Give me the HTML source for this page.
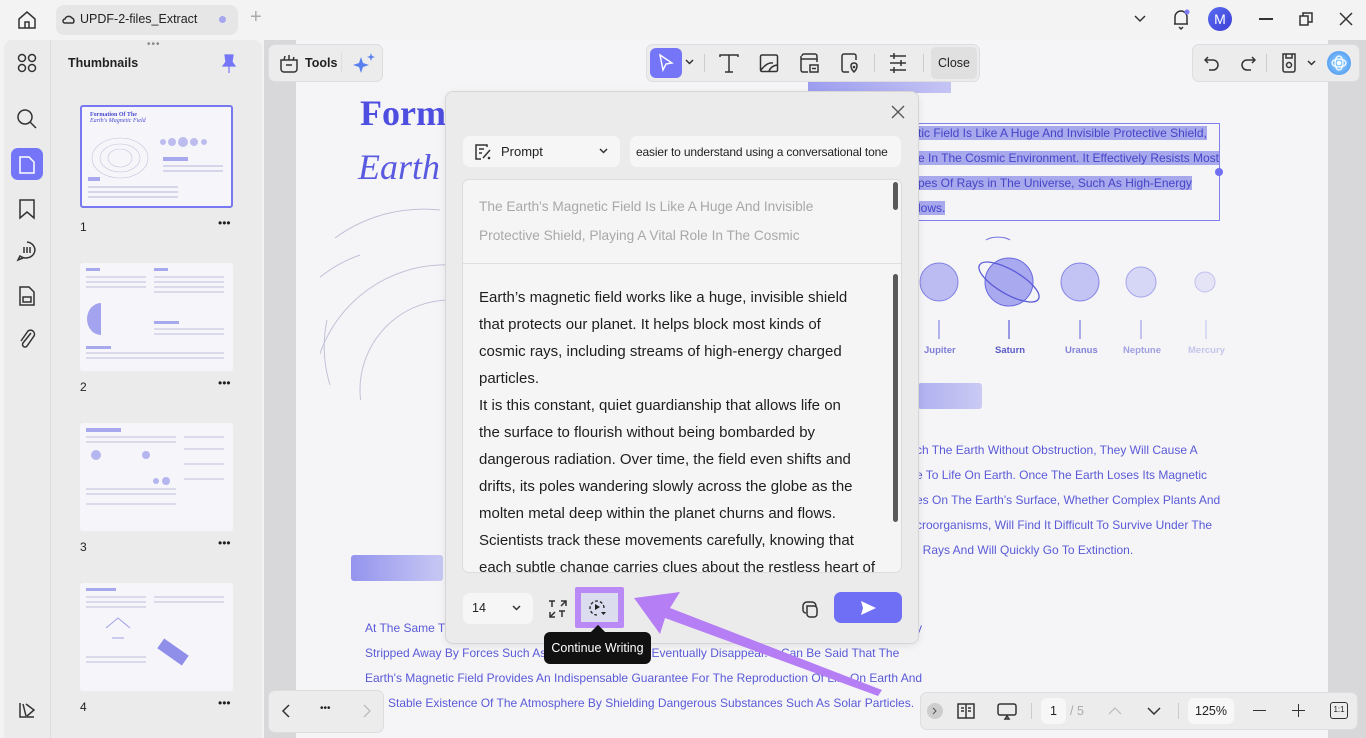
<!DOCTYPE html>
<html><head><meta charset="utf-8"><style>
*{box-sizing:border-box;margin:0;padding:0}
body{width:1366px;height:738px;overflow:hidden;background:#f3f3f3;font-family:"Liberation Sans",sans-serif;position:relative;color:#222}
.a{position:absolute}
.pdf{color:#5a5ad8;font-size:12px;white-space:nowrap}
.ico{stroke:#333;fill:none;stroke-width:1.5}
</style></head><body>
<!-- top bar -->
<svg class="a" style="left:16px;top:9px" width="22" height="22" viewBox="0 0 22 22"><path class="ico" d="M3 10 L11 3 L19 10 V19 H3Z M9 19 V13 H13 V19"/></svg>
<div class="a" style="left:56px;top:5px;width:182px;height:30px;background:#e6e6e6;border-radius:8px"></div>
<div class="a" style="left:80px;top:12px;font-size:12.5px">UPDF-2-files_Extract</div>
<svg class="a" style="left:62px;top:13px" width="14" height="12"><path class="ico" stroke-width="1.1" d="M3 10 H11 A3 3 0 0 0 10 5 A4 4 0 0 0 3 6 A2 2 0 0 0 3 10Z"/></svg>
<div class="a" style="left:219px;top:16px;width:7px;height:7px;border-radius:50%;background:#a6a6ee"></div>
<div class="a" style="left:250px;top:6px;font-size:20px;color:#aaa">+</div>
<svg class="a" style="left:1133px;top:13px" width="14" height="10"><path class="ico" stroke-width="1.2" d="M2 3 L7 8 L12 3"/></svg>
<svg class="a" style="left:1170px;top:7px" width="22" height="24"><path class="ico" stroke-width="1.3" d="M5 17 V10 A6 6 0 0 1 17 10 V17 H4 H18 M9 20 L11 22 L13 20"/><circle cx="17" cy="5" r="2.5" fill="#7b7bf5"/></svg>
<div class="a" style="left:1208px;top:7px;width:24px;height:24px;border-radius:50%;background:linear-gradient(135deg,#5a6cf0,#3c3fd6);color:#fff;font-size:14px;text-align:center;line-height:24px">M</div>
<div class="a" style="left:1259px;top:18px;width:14px;height:1.5px;background:#333"></div>
<svg class="a" style="left:1298px;top:11px" width="16" height="16"><path class="ico" stroke-width="1.2" d="M2 5 H10 V14 H2Z M5 5 V2 H14 V11 H10"/></svg>
<svg class="a" style="left:1338px;top:11px" width="16" height="16"><path class="ico" stroke-width="1.2" d="M2 2 L14 14 M14 2 L2 14"/></svg>

<!-- left rail + panel -->
<div class="a" style="left:4px;top:40px;width:258px;height:698px;background:#ebebeb;border-radius:8px 8px 0 0"></div>
<div class="a" style="left:50px;top:40px;width:1px;height:698px;background:#dcdcdc"></div>
<div class="a" style="left:147px;top:39px;font-size:10px;color:#888;letter-spacing:1px">•••</div>
<svg class="a" style="left:17px;top:53px" width="20" height="20"><g class="ico" stroke-width="1.2"><circle cx="5" cy="5" r="3.5"/><circle cx="15" cy="5" r="3.5"/><circle cx="5" cy="15" r="3.5"/><circle cx="15" cy="15" r="3.5"/></g></svg>
<svg class="a" style="left:16px;top:108px" width="22" height="22"><path class="ico" d="M9 2 A7 7 0 1 0 9 16 A7 7 0 1 0 9 2 M14 14 L20 20"/></svg>
<div class="a" style="left:11px;top:148px;width:32px;height:32px;background:#7575f7;border-radius:7px"></div>
<svg class="a" style="left:18px;top:155px" width="18" height="20"><path d="M2 2 H11 L16 7 V18 H2Z" fill="none" stroke="#fff" stroke-width="1.5"/></svg>
<svg class="a" style="left:18px;top:198px" width="18" height="22"><path class="ico" d="M2 2 H16 V20 L9 14 L2 20Z"/></svg>
<svg class="a" style="left:15px;top:240px" width="24" height="22"><path class="ico" d="M12 2 A9 8 0 1 1 5 16 L3 20 L8 18 M9 7 V13 M12 7 V13 M15 7 V13"/></svg>
<svg class="a" style="left:18px;top:285px" width="18" height="22"><path class="ico" d="M2 2 H11 L16 7 V20 H2Z M5 12 H13 V17 H5Z"/></svg>
<svg class="a" style="left:17px;top:328px" width="20" height="22"><path class="ico" d="M14 5 L6 15 A2.5 2.5 0 0 0 10 18 L17 8 A4 4 0 0 0 11 3 L4 13"/></svg>
<svg class="a" style="left:17px;top:700px" width="20" height="20"><path class="ico" d="M3 3 V17 H17 M6 4 L9 16 M9 4 L17 10 L10 16"/></svg>

<div class="a" style="left:68px;top:56px;font-size:12.5px;font-weight:bold">Thumbnails</div>
<svg class="a" style="left:221px;top:54px" width="16" height="20"><path d="M4 1 H12 L11 8 L14 12 H2 L5 8Z M8 12 V19" fill="#7575f7" stroke="#7575f7" stroke-width="1.2"/></svg>

<!-- thumbnails -->
<div class="a" style="left:80px;top:105px;width:153px;height:103px;background:#f6f6fa;border:2px solid #7878f0;border-radius:3px"></div>
<div class="a" style="left:90px;top:112px;font:bold 6px 'Liberation Serif',serif;color:#4a4ad0">Formation Of The<br><i style="font-weight:normal">Earth's Magnetic Field</i></div>
<svg class="a" style="left:88px;top:130px" width="145" height="75"><g fill="none" stroke="#c3c3dd" stroke-width=".6"><ellipse cx="32" cy="28" rx="28" ry="20"/><ellipse cx="32" cy="28" rx="20" ry="14"/><ellipse cx="32" cy="28" rx="12" ry="9"/></g><g fill="#bcbcef"><circle cx="75" cy="12" r="3"/><circle cx="84" cy="12" r="4"/><circle cx="95" cy="12" r="5"/><circle cx="106" cy="12" r="4"/><circle cx="116" cy="12" r="3"/></g><rect x="75" y="27" width="25" height="4" fill="#a8a8ee"/><rect x="0" y="47" width="12" height="4" fill="#a8a8ee"/><g fill="#d6d6ea"><rect x="75" y="35" width="60" height="2"/><rect x="75" y="40" width="60" height="2"/><rect x="0" y="56" width="90" height="2"/><rect x="0" y="61" width="90" height="2"/><rect x="0" y="66" width="90" height="2"/></g><rect x="75" y="-8" width="30" height="3" fill="#a8a8ee"/></svg>
<div class="a" style="left:80px;top:220px;font-size:12px">1</div><div class="a" style="left:218px;top:216px;font-size:12px">•••</div>

<div class="a" style="left:80px;top:263px;width:153px;height:108px;background:#f6f6fa;border-radius:3px"></div>
<svg class="a" style="left:86px;top:268px" width="145" height="100"><rect x="0" y="0" width="14" height="3" fill="#a8a8ee"/><rect x="68" y="0" width="14" height="3" fill="#a8a8ee"/><g fill="#dadaea"><rect x="0" y="8" width="60" height="2"/><rect x="0" y="13" width="60" height="2"/><rect x="0" y="18" width="60" height="2"/><rect x="68" y="8" width="70" height="2"/><rect x="68" y="13" width="70" height="2"/><rect x="68" y="18" width="70" height="2"/><rect x="68" y="23" width="70" height="2"/><rect x="68" y="60" width="70" height="2"/><rect x="68" y="65" width="70" height="2"/><rect x="0" y="84" width="138" height="2"/><rect x="0" y="89" width="138" height="2"/></g><path d="M15 35 A14 16 0 0 0 15 67Z" fill="#a3a3ef"/><rect x="0" y="78" width="25" height="3" fill="#a8a8ee"/><rect x="68" y="53" width="25" height="3" fill="#a8a8ee"/></svg>
<div class="a" style="left:80px;top:380px;font-size:12px">2</div><div class="a" style="left:218px;top:376px;font-size:12px">•••</div>

<div class="a" style="left:80px;top:423px;width:153px;height:108px;background:#f6f6fa;border-radius:3px"></div>
<svg class="a" style="left:86px;top:428px" width="145" height="100"><rect x="0" y="0" width="35" height="4" fill="#a8a8ee"/><g fill="#dadaea"><rect x="0" y="8" width="90" height="2"/><rect x="0" y="13" width="90" height="2"/><rect x="98" y="8" width="40" height="2"/><rect x="98" y="20" width="40" height="2"/><rect x="98" y="35" width="40" height="2"/><rect x="98" y="50" width="40" height="2"/><rect x="0" y="60" width="90" height="2"/><rect x="0" y="65" width="90" height="2"/><rect x="0" y="75" width="90" height="2"/></g><g fill="#b5b5ef"><circle cx="10" cy="27" r="5"/><circle cx="60" cy="27" r="4"/><circle cx="70" cy="53" r="3"/><circle cx="80" cy="53" r="4"/></g></svg>
<div class="a" style="left:80px;top:540px;font-size:12px">3</div><div class="a" style="left:218px;top:536px;font-size:12px">•••</div>

<div class="a" style="left:80px;top:583px;width:153px;height:108px;background:#f6f6fa;border-radius:3px"></div>
<svg class="a" style="left:86px;top:588px" width="145" height="100"><rect x="0" y="0" width="30" height="3" fill="#a8a8ee"/><g fill="#dadaea"><rect x="0" y="8" width="60" height="2"/><rect x="0" y="13" width="60" height="2"/><rect x="0" y="18" width="60" height="2"/><rect x="68" y="8" width="70" height="2"/><rect x="68" y="13" width="70" height="2"/><rect x="0" y="68" width="60" height="2"/><rect x="0" y="73" width="60" height="2"/></g><path d="M20 40 L32 30 L44 40 M26 50 L38 50" stroke="#9f9fea" fill="none"/><rect x="72" y="58" width="30" height="12" fill="#8f8fea" transform="rotate(35 87 64)"/></svg>
<div class="a" style="left:80px;top:700px;font-size:12px">4</div><div class="a" style="left:218px;top:696px;font-size:12px">•••</div>

<!-- viewer -->
<div class="a" style="left:264px;top:40px;width:1102px;height:698px;background:#d8d8da"></div>
<div class="a" style="left:296px;top:40px;width:1032px;height:698px;background:#f5f5f7"></div>

<!-- PDF content -->
<div class="a" style="left:360px;top:92px;font:bold 36px 'Liberation Serif',serif;color:#4e4ee0">Form</div>
<div class="a" style="left:358px;top:146px;font:italic 36px 'Liberation Serif',serif;color:#5a5ae0">Earth</div>
<svg class="a" style="left:320px;top:200px" width="130" height="200"><g fill="none" stroke="#c2c2d8" stroke-width="1"><path d="M120 10 A150 150 0 0 0 15 38"/><path d="M40 55 A125 125 0 0 0 130 312"/><path d="M130 65 A110 110 0 0 0 120 330"/><path d="M130 100 A80 80 0 0 0 130 280"/><path d="M7 120 A130 130 0 0 0 10 185"/></g></svg>
<div class="a" style="left:808px;top:80px;width:143px;height:13px;background:linear-gradient(90deg,#9d9df0,#c4c4f4)"></div>
<div class="a" style="left:351px;top:555px;width:92px;height:26px;border-radius:3px;background:linear-gradient(90deg,#9494ee,#c8c8f4)"></div>
<div class="a" style="left:918px;top:383px;width:64px;height:26px;border-radius:3px;background:linear-gradient(90deg,#b0b0f0,#cacaf4)"></div>

<div class="a" style="left:910px;top:123px;width:310px;height:98px;border:1.5px solid #8080ec"></div>
<div class="a" style="left:1215px;top:168px;width:8px;height:8px;border-radius:50%;background:#6f6ff0"></div>
<div class="a pdf" style="left:918px;top:121px;line-height:25px;color:#4545c8">
<span style="background:#a8a8ec">tic Field Is Like A Huge And Invisible Protective Shield,</span><br>
<span style="background:#a8a8ec">e In The Cosmic Environment. It Effectively Resists Most</span><br>
<span style="background:#a8a8ec">pes Of Rays in The Universe, Such As High-Energy</span><br>
<span style="background:#a8a8ec">lows.</span></div>

<svg class="a" style="left:910px;top:235px" width="320" height="130"><path d="M76 5 A14 6 0 0 1 100 5" stroke="#6d6de0" fill="none"/><circle cx="29" cy="47" r="19" fill="#bcbcf2" stroke="#8080e4"/><circle cx="99" cy="47" r="24" fill="#a9a9f0" stroke="#6a6ae0"/><ellipse cx="99" cy="47" rx="34" ry="12" transform="rotate(30 99 47)" fill="none" stroke="#5a5ad8" stroke-width="1.3"/><circle cx="170" cy="47" r="19" fill="#c4c4f4" stroke="#8484e4"/><circle cx="231" cy="47" r="15" fill="#d6d6f6" stroke="#a5a5ec"/><circle cx="295" cy="47" r="10" fill="#e4e4f6" stroke="#c0c0ee"/><g stroke-width="1.2"><path d="M29 85 V104" stroke="#8686e4"/><path d="M99 85 V104" stroke="#5a5ad8"/><path d="M170 85 V104" stroke="#7a7ae0"/><path d="M231 85 V104" stroke="#a0a0ea"/><path d="M296 85 V104" stroke="#c8c8f0"/></g></svg>
<div class="a" style="left:924px;top:345px;font-size:9.5px;font-weight:bold;color:#7e7ed8">Jupiter</div>
<div class="a" style="left:995px;top:345px;font-size:9.5px;font-weight:bold;color:#5b5bc8">Saturn</div>
<div class="a" style="left:1065px;top:345px;font-size:9.5px;font-weight:bold;color:#8282d8">Uranus</div>
<div class="a" style="left:1123px;top:345px;font-size:9.5px;font-weight:bold;color:#a0a0e2">Neptune</div>
<div class="a" style="left:1188px;top:345px;font-size:9.5px;font-weight:bold;color:#c4c4ec">Mercury</div>

<div class="a pdf" style="left:916px;top:438px;line-height:25px">ch The Earth Without Obstruction, They Will Cause A<br>e To Life On Earth. Once The Earth Loses Its Magnetic<br>es On The Earth's Surface, Whether Complex Plants And<br>croorganisms, Will Find It Difficult To Survive Under The<br>: Rays And Will Quickly Go To Extinction.</div>
<div class="a pdf" style="left:365px;top:616px;line-height:25px">At The Same Ti<br>Stripped Away By Forces Such As <span style="margin-left:92px">d Eventually Disappear. It Can Be Said That The</span><br>Earth's Magnetic Field Provides An Indispensable Guarantee For The Reproduction Of Life On Earth And<br><span style="margin-left:23px">Stable Existence Of The Atmosphere By Shielding Dangerous Substances Such As Solar Particles.</span></div>
<div class="a pdf" style="left:916px;top:621px">y</div>

<!-- toolbars -->
<div class="a" style="left:268px;top:44px;width:115px;height:38px;background:#ececec;border:1px solid #ddd;border-radius:7px"></div>
<svg class="a" style="left:279px;top:52px" width="20" height="22"><path class="ico" stroke-width="1.3" d="M2 8 H18 V17 A3 3 0 0 1 15 20 H5 A3 3 0 0 1 2 17Z M7 13 H13 M5 8 L6 4 M10 8 L10 3 M14 8 L15 5"/></svg>
<div class="a" style="left:305px;top:56px;font-size:12.5px;font-weight:bold">Tools</div>
<div class="a" style="left:341px;top:52px;width:1px;height:20px;background:#ddd"></div>
<svg class="a" style="left:352px;top:52px" width="24" height="22"><path d="M9 5 L11 11 L17 13 L11 15 L9 21 L7 15 L1 13 L7 11Z" fill="#5a80f0"/><path d="M19 1 L20 4 L23 5 L20 6 L19 9 L18 6 L15 5 L18 4Z" fill="#5a80f0"/></svg>

<div class="a" style="left:646px;top:44px;width:334px;height:38px;background:#ececec;border:1px solid #ddd;border-radius:7px"></div>
<div class="a" style="left:650px;top:48px;width:32px;height:30px;background:#7575f7;border-radius:6px"></div>
<svg class="a" style="left:657px;top:53px" width="18" height="20"><path d="M3 2 L15 10 L9 11 L6 17Z" fill="none" stroke="#fff" stroke-width="1.4"/></svg>
<svg class="a" style="left:685px;top:59px" width="9" height="6"><path class="ico" stroke-width="1.1" d="M1 1 L4.5 4.5 L8 1"/></svg>
<div class="a" style="left:704px;top:54px;width:1px;height:18px;background:#ccc"></div>
<svg class="a" style="left:718px;top:53px" width="22" height="20"><path class="ico" d="M2 4 V2 H20 V4 M11 2 V19 M7 19 H15"/></svg>
<svg class="a" style="left:759px;top:53px" width="20" height="20"><path class="ico" stroke-width="1.3" d="M3 2 H17 A1.5 1.5 0 0 1 18.5 3.5 V17 A1.5 1.5 0 0 1 17 18.5 H3 A1.5 1.5 0 0 1 1.5 17 V3.5 A1.5 1.5 0 0 1 3 2 M2 17 Q8 9 14 10 M10 18 Q12 13 18 12"/></svg>
<svg class="a" style="left:799px;top:52px" width="22" height="22"><path class="ico" stroke-width="1.3" d="M3 4 A2 2 0 0 1 5 2 H16 A2 2 0 0 1 18 4 V10 M2 7 H18 M2 4 V18 A2 2 0 0 0 4 20 H9 M11 13 H19 V20 H11Z M13 16.5 H17"/></svg>
<svg class="a" style="left:839px;top:52px" width="22" height="22"><path class="ico" stroke-width="1.3" d="M3 4 A2 2 0 0 1 5 2 H15 A2 2 0 0 1 17 4 V8 M3 4 V18 A2 2 0 0 0 5 20 H10 M15 20 C11 16 11 11 15 11 C19 11 19 16 15 20Z"/><circle cx="15" cy="15" r="1.3" fill="#333"/></svg>
<div class="a" style="left:874px;top:54px;width:1px;height:18px;background:#ccc"></div>
<svg class="a" style="left:888px;top:52px" width="20" height="22"><path class="ico" stroke-width="1.3" d="M2 4 H18 M2 11 H18 M2 18 H18 M6 1 V7 M13 8 V14 M6 15 V21"/></svg>
<div class="a" style="left:923px;top:54px;width:1px;height:18px;background:#ccc"></div>
<div class="a" style="left:931px;top:47px;width:46px;height:32px;background:#e0e0e0;border-radius:5px;font-size:12.5px;text-align:center;line-height:32px">Close</div>

<div class="a" style="left:1192px;top:44px;width:168px;height:38px;background:#ececec;border:1px solid #ddd;border-radius:7px"></div>
<svg class="a" style="left:1204px;top:55px" width="16" height="16"><path class="ico" stroke-width="1.2" d="M4 2 L1 5 L4 8 M1 5 H9 A5 5 0 0 1 9 15 H5"/></svg>
<svg class="a" style="left:1240px;top:55px" width="16" height="16"><path class="ico" stroke-width="1.2" d="M12 2 L15 5 L12 8 M15 5 H7 A5 5 0 0 0 7 15 H11"/></svg>
<div class="a" style="left:1266px;top:54px;width:1px;height:18px;background:#ccc"></div>
<svg class="a" style="left:1280px;top:52px" width="18" height="22"><path class="ico" stroke-width="1.2" d="M3 2 H15 V18 A2 2 0 0 1 13 20 H5 A2 2 0 0 1 3 18Z M6 2 V6 H12 V2"/><circle cx="9" cy="13" r="2.5" class="ico" stroke-width="1.2"/></svg>
<svg class="a" style="left:1307px;top:60px" width="9" height="6"><path class="ico" stroke-width="1.1" d="M1 1 L4.5 4.5 L8 1"/></svg>
<div class="a" style="left:1327px;top:51px;width:24px;height:24px;border-radius:50%;background:radial-gradient(circle,#9fd8ff,#3c8cf0)"></div>
<svg class="a" style="left:1330px;top:54px" width="18" height="18"><ellipse cx="9" cy="9" rx="7" ry="4" fill="none" stroke="#fff" stroke-width="1.2"/><ellipse cx="9" cy="9" rx="4" ry="7" fill="none" stroke="#fff" stroke-width="1.2"/><circle cx="9" cy="9" r="2" fill="#fff"/></svg>

<!-- dialog -->
<div class="a" style="left:445px;top:91px;width:474px;height:553px;background:#ebebeb;border:1px solid #d6d6d6;border-radius:8px;box-shadow:0 2px 8px rgba(0,0,0,.08)"></div>
<svg class="a" style="left:890px;top:104px" width="16" height="16"><path d="M2 2 L14 14 M14 2 L2 14" stroke="#555" stroke-width="1.3"/></svg>
<div class="a" style="left:463px;top:136px;width:157px;height:31px;background:#f6f6f6;border-radius:7px"></div>
<svg class="a" style="left:474px;top:143px" width="18" height="18"><path class="ico" stroke-width="1.2" d="M13 4 V2 H2 V16 H7 M5 6 H10 M5 10 H8 M9 15 L16 7"/><circle cx="15" cy="15" r="1.3" fill="#333"/></svg>
<div class="a" style="left:501px;top:144px;font-size:13px">Prompt</div>
<svg class="a" style="left:599px;top:148px" width="9" height="6"><path class="ico" stroke-width="1.1" d="M1 1 L4.5 4.5 L8 1"/></svg>
<div class="a" style="left:630px;top:136px;width:271px;height:31px;background:#f6f6f6;border-radius:7px;overflow:hidden"></div>
<div class="a" style="left:636px;top:145px;font-size:12px;letter-spacing:-0.15px;white-space:nowrap;width:260px;overflow:hidden">easier to understand using a conversational tone</div>

<div class="a" style="left:462px;top:179px;width:440px;height:394px;background:#f5f5f5;border:1px solid #dcdcdc;border-radius:7px"></div>
<div class="a" style="left:463px;top:263px;width:438px;height:1px;background:#e0e0e0"></div>
<div class="a" style="left:479px;top:192px;font-size:13.7px;line-height:29px;color:#a8a8a8">The Earth's Magnetic Field Is Like A Huge And Invisible<br>Protective Shield, Playing A Vital Role In The Cosmic</div>
<div class="a" style="left:893px;top:182px;width:5px;height:28px;background:#5a5a5a;border-radius:3px"></div>
<div class="a" style="left:893px;top:274px;width:5px;height:248px;background:#5a5a5a;border-radius:3px"></div>
<div class="a" style="left:463px;top:284px;width:420px;height:288px;overflow:hidden">
<div style="padding-left:16px;font-size:15px;line-height:27px;color:#1e1e1e;white-space:nowrap">Earth’s magnetic field works like a huge, invisible shield<br>that protects our planet. It helps block most kinds of<br>cosmic rays, including streams of high-energy charged<br>particles.<br>It is this constant, quiet guardianship that allows life on<br>the surface to flourish without being bombarded by<br>dangerous radiation. Over time, the field even shifts and<br>drifts, its poles wandering slowly across the globe as the<br>molten metal deep within the planet churns and flows.<br>Scientists track these movements carefully, knowing that<br>each subtle change carries clues about the restless heart of</div></div>

<div class="a" style="left:463px;top:593px;width:70px;height:31px;background:#f6f6f6;border-radius:7px"></div>
<div class="a" style="left:472px;top:601px;font-size:12.5px">14</div>
<svg class="a" style="left:512px;top:605px" width="9" height="6"><path class="ico" stroke-width="1.1" d="M1 1 L4.5 4.5 L8 1"/></svg>
<svg class="a" style="left:547px;top:598px" width="22" height="22"><g class="ico" stroke-width="1.1"><path d="M2 3 H8 M5 3 V9 M12 13 H18 M15 13 V19 M14 3 L19 3 L19 8 M19 3 L14 8 M8 19 L3 19 L3 14 M3 19 L8 14"/></g></svg>
<div class="a" style="left:575px;top:587px;width:49px;height:41px;background:#b98af5;border-radius:2px"></div>
<div class="a" style="left:581px;top:593px;width:37px;height:29px;background:#dcdcef"></div>
<svg class="a" style="left:587px;top:597px" width="22" height="22"><path d="M17 11 A7 7 0 1 0 10 18" fill="none" stroke="#222" stroke-width="1.3" stroke-dasharray="3 2"/><path d="M8 7 L13 10 L8 13Z" fill="#222"/><path d="M14 15 L19 15 L16.5 18Z" fill="#222"/></svg>
<svg class="a" style="left:800px;top:599px" width="20" height="20"><path class="ico" stroke-width="1.3" d="M7 3 H12 A4 4 0 0 1 16 7 V8 M3 7 A4 4 0 0 1 7 3 M7 7 H14 A3 3 0 0 1 17 10 V15 A3 3 0 0 1 14 18 H10 A3 3 0 0 1 7 15Z M3 7 V11 A3 3 0 0 0 6 14"/></svg>
<div class="a" style="left:834px;top:592px;width:68px;height:31px;background:#6f6ff5;border-radius:7px"></div>
<svg class="a" style="left:859px;top:600px" width="18" height="16"><path d="M2 1 L17 8 L2 15 L4 8Z" fill="#fff"/></svg>

<!-- arrow -->
<svg class="a" style="left:620px;top:590px" width="270" height="110"><path d="M14 8 L60 2 L50 18 L262 100 L258 106 L45 28 L40 44Z" fill="#b57ef5"/></svg>

<!-- tooltip -->
<div class="a" style="left:593px;top:627px;width:10px;height:10px;background:#111;transform:rotate(45deg)"></div>
<div class="a" style="left:544px;top:632px;width:107px;height:32px;background:#111;border-radius:6px;color:#fff;font-size:12.5px;text-align:center;line-height:32px">Continue Writing</div>

<!-- bottom bars -->
<div class="a" style="left:268px;top:690px;width:116px;height:43px;background:#ececec;border:1px solid #ddd;border-radius:7px"></div>
<svg class="a" style="left:281px;top:704px" width="10" height="14"><path class="ico" stroke-width="1.3" d="M8 1 L2 7 L8 13"/></svg>
<div class="a" style="left:320px;top:703px;font-size:10px">•••</div>
<svg class="a" style="left:362px;top:704px" width="10" height="14"><path stroke="#bbb" fill="none" stroke-width="1.3" d="M2 1 L8 7 L2 13"/></svg>

<div class="a" style="left:920px;top:692px;width:438px;height:38px;background:#ececec;border:1px solid #ddd;border-radius:7px"></div>
<div class="a" style="left:927px;top:703px;width:16px;height:16px;border-radius:50%;background:#cdcdcd"></div>
<svg class="a" style="left:931px;top:707px" width="8" height="8"><path d="M2 1 L5 4 L2 7" stroke="#555" fill="none"/></svg>
<svg class="a" style="left:956px;top:702px" width="20" height="18"><path class="ico" stroke-width="1.2" d="M2 2 H18 V16 H2Z M10 2 V16 M5 6 H8 M5 9 H8 M12 6 H15 M12 9 H15"/></svg>
<svg class="a" style="left:996px;top:702px" width="22" height="18"><path class="ico" stroke-width="1.2" d="M4 2 H18 A2 2 0 0 1 20 4 V11 A2 2 0 0 1 18 13 H4 A2 2 0 0 1 2 11 V4 A2 2 0 0 1 4 2 M9 17 L11 14 L13 17Z"/></svg>
<div class="a" style="left:1031px;top:703px;width:1px;height:16px;background:#ccc"></div>
<div class="a" style="left:1041px;top:698px;width:25px;height:26px;background:#f7f7f7;border-radius:6px;font-size:12.5px;text-align:center;line-height:26px">1</div>
<div class="a" style="left:1070px;top:704px;font-size:12.5px;color:#aaa">/ 5</div>
<svg class="a" style="left:1108px;top:707px" width="14" height="8"><path stroke="#bbb" fill="none" stroke-width="1.2" d="M1 7 L7 1 L13 7"/></svg>
<svg class="a" style="left:1147px;top:707px" width="14" height="8"><path class="ico" stroke-width="1.2" d="M1 1 L7 7 L13 1"/></svg>
<div class="a" style="left:1178px;top:703px;width:1px;height:16px;background:#ccc"></div>
<div class="a" style="left:1188px;top:698px;width:46px;height:26px;background:#f7f7f7;border-radius:6px;font-size:12.5px;text-align:center;line-height:26px">125%</div>
<div class="a" style="left:1253px;top:710px;width:13px;height:1.3px;background:#333"></div>
<div class="a" style="left:1292px;top:710px;width:13px;height:1.3px;background:#333"></div>
<div class="a" style="left:1298px;top:704px;width:1.3px;height:13px;background:#333"></div>
<div class="a" style="left:1330px;top:702px;width:18px;height:17px;border:1.3px solid #333;border-radius:3px;font-size:8px;text-align:center;line-height:14px">1:1</div>
</body></html>
